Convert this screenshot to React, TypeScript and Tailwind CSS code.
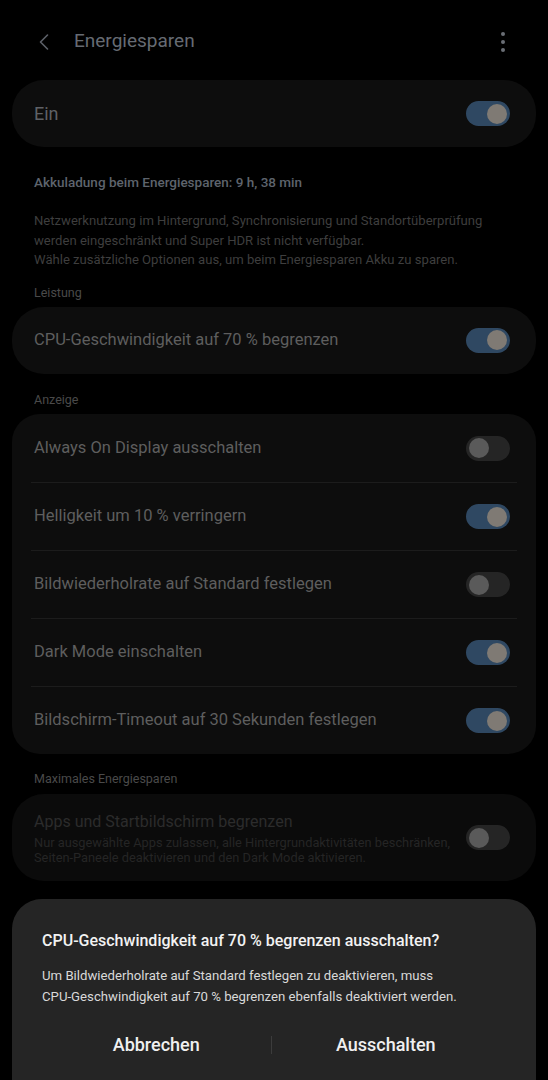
import { ChevronLeft } from 'lucide-react'

const font = { fontFamily: 'Roboto, "Noto Sans", sans-serif' }

function Toggle({ on }: { on: boolean }) {
  return (
    <div className={`w-[44px] h-[25px] rounded-full flex items-center px-[3px] ${on ? 'bg-[#2f4862] justify-end' : 'bg-[#252525] justify-start'}`}>
      <div className={`w-[20px] h-[20px] rounded-full ${on ? 'bg-[#7f7a74]' : 'bg-[#5a5a5a]'}`} />
    </div>
  )
}

function Row({ label, on, divider }: { label: string; on: boolean; divider?: boolean }) {
  return (
    <div className={`h-[68px] mx-[19px] pl-[3px] pr-[7px] flex items-center justify-between ${divider ? 'border-t border-[#1c1c1c]' : ''}`}>
      <span className="text-[16.5px] text-[#5e5e5e]">{label}</span>
      <Toggle on={on} />
    </div>
  )
}

export default function App() {
  return (
    <div style={font} className="relative w-[548px] h-[1080px] bg-black overflow-hidden">
      <div className="h-[80px] flex items-center pl-[30px] pr-[43px] pt-[3px]">
        <ChevronLeft size={28} strokeWidth={1.4} className="text-[#5c6068]" />
        <h1 className="ml-[16px] text-[19px] text-[#666b73]">Energiesparen</h1>
        <div className="ml-auto flex flex-col gap-[4px]">
          <span className="w-[4px] h-[4px] rounded-full bg-[#6a6e75]" />
          <span className="w-[4px] h-[4px] rounded-full bg-[#6a6e75]" />
          <span className="w-[4px] h-[4px] rounded-full bg-[#6a6e75]" />
        </div>
      </div>

      <div className="mx-[12px] h-[67px] rounded-[32px] bg-[#0d0d0d] flex items-center justify-between pl-[22px] pr-[26px]">
        <span className="text-[18px] text-[#5f6166]">Ein</span>
        <Toggle on />
      </div>

      <p className="mt-[25px] px-[34px] text-[13.5px] font-medium text-[#5e646d]">Akkuladung beim Energiesparen: 9 h, 38 min</p>

      <p className="mt-[19px] px-[34px] text-[13.1px] leading-[19.5px] text-[#3e3e3e]">
        Netzwerknutzung im Hintergrund, Synchronisierung und Standortüberprüfung
        <br />
        werden eingeschränkt und Super HDR ist nicht verfügbar.
        <br />
        Wähle zusätzliche Optionen aus, um beim Energiesparen Akku zu sparen.
      </p>

      <p className="mt-[14px] px-[34px] text-[12.5px] text-[#4a4a4a]">Leistung</p>

      <div className="mt-[4px] mx-[12px] h-[67px] rounded-[32px] bg-[#0d0d0d] flex items-center justify-between pl-[22px] pr-[26px]">
        <span className="text-[16.5px] text-[#5e5e5e]">CPU-Geschwindigkeit auf 70 % begrenzen</span>
        <Toggle on />
      </div>

      <p className="mt-[17px] px-[34px] text-[12.5px] text-[#4a4a4a]">Anzeige</p>

      <div className="mt-[5px] mx-[12px] rounded-[28px] bg-[#0d0d0d]">
        <Row label="Always On Display ausschalten" on={false} />
        <Row label="Helligkeit um 10 % verringern" on divider />
        <Row label="Bildwiederholrate auf Standard festlegen" on={false} divider />
        <Row label="Dark Mode einschalten" on divider />
        <Row label="Bildschirm-Timeout auf 30 Sekunden festlegen" on divider />
      </div>

      <p className="mt-[16px] px-[34px] text-[12.5px] text-[#4a4a4a]">Maximales Energiesparen</p>

      <div className="mt-[5px] mx-[12px] h-[87px] rounded-[32px] bg-[#0b0b0b] flex items-center justify-between pl-[22px] pr-[26px]">
        <div className="flex flex-col">
          <span className="text-[16px] text-[#2c2c2c] leading-[22px]">Apps und Startbildschirm begrenzen</span>
          <span className="mt-[2px] text-[12.8px] leading-[15px] text-[#252525]">
            Nur ausgewählte Apps zulassen, alle Hintergrundaktivitäten beschränken,
            <br />
            Seiten-Paneele deaktivieren und den Dark Mode aktivieren.
          </span>
        </div>
        <Toggle on={false} />
      </div>

      <div className="mt-[18px] mx-[12px] h-[80px] rounded-[32px] bg-[#0d0d0d]" />

      <div className="absolute left-[12px] right-[12px] top-[899px] h-[210px] rounded-[30px] bg-[#252525] px-[30px] pt-[30px]">
        <h2 className="text-[16px] text-[#f2f2f2] font-medium">CPU-Geschwindigkeit auf 70 % begrenzen ausschalten?</h2>
        <p className="mt-[12px] text-[13.2px] leading-[21px] text-[#d9d9d9]">
          Um Bildwiederholrate auf Standard festlegen zu deaktivieren, muss
          <br />
          CPU-Geschwindigkeit auf 70 % begrenzen ebenfalls deaktiviert werden.
        </p>
        <div className="mt-[24px] mr-[6px] flex items-center">
          <button className="flex-1 text-[18px] font-medium text-[#f0f0f0]">Abbrechen</button>
          <span className="w-px h-[18px] bg-[#3c3c3c]" />
          <button className="flex-1 text-[18px] font-medium text-[#f0f0f0]">Ausschalten</button>
        </div>
      </div>
    </div>
  )
}
